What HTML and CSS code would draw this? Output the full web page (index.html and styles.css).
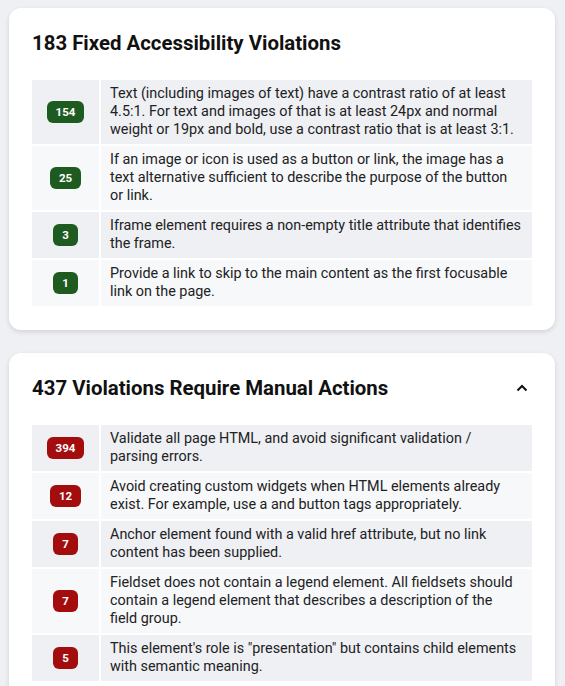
FILE: index.html
```html
<!DOCTYPE html>
<html lang="en">
<head>
    <meta charset="UTF-8">
    <meta name="viewport" content="width=device-width, initial-scale=1.0">
    <title>Accessibility Report</title>
    <link rel="stylesheet" href="styles.css">
</head>
<body>
    <div class="page">
        <section class="card">
            <div class="card-head">
                <h2>183 Fixed Accessibility Violations</h2>
            </div>
            <div class="rules">
                <div class="rule">
                    <div class="count"><span class="badge fixed">154</span></div>
                    <div class="desc">Text (including images of text) have a contrast ratio of at least 4.5:1. For text and images of that is at least 24px and normal weight or 19px and bold, use a contrast ratio that is at least 3:1.</div>
                </div>
                <div class="rule">
                    <div class="count"><span class="badge fixed">25</span></div>
                    <div class="desc">If an image or icon is used as a button or link, the image has a text alternative sufficient to describe the purpose of the button or link.</div>
                </div>
                <div class="rule">
                    <div class="count"><span class="badge fixed">3</span></div>
                    <div class="desc">Iframe element requires a non-empty title attribute that identifies the frame.</div>
                </div>
                <div class="rule">
                    <div class="count"><span class="badge fixed">1</span></div>
                    <div class="desc">Provide a link to skip to the main content as the first focusable link on the page.</div>
                </div>
            </div>
        </section>

        <section class="card">
            <div class="card-head">
                <h2>437 Violations Require Manual Actions</h2>
                <button class="toggle" aria-label="Collapse">
                    <svg width="12" height="8" viewBox="0 0 12 8"><path d="M1.5 6.5 6 2l4.5 4.5" fill="none" stroke="#111" stroke-width="2"/></svg>
                </button>
            </div>
            <div class="rules">
                <div class="rule">
                    <div class="count"><span class="badge manual">394</span></div>
                    <div class="desc">Validate all page HTML, and avoid significant validation / parsing errors.</div>
                </div>
                <div class="rule">
                    <div class="count"><span class="badge manual">12</span></div>
                    <div class="desc">Avoid creating custom widgets when HTML elements already exist. For example, use a and button tags appropriately.</div>
                </div>
                <div class="rule">
                    <div class="count"><span class="badge manual">7</span></div>
                    <div class="desc">Anchor element found with a valid href attribute, but no link content has been supplied.</div>
                </div>
                <div class="rule">
                    <div class="count"><span class="badge manual">7</span></div>
                    <div class="desc">Fieldset does not contain a legend element. All fieldsets should contain a legend element that describes a description of the field group.</div>
                </div>
                <div class="rule">
                    <div class="count"><span class="badge manual">5</span></div>
                    <div class="desc">This element's role is "presentation" but contains child elements with semantic meaning.</div>
                </div>
            </div>
        </section>
    </div>
</body>
</html>
```

FILE: styles.css
```css
body {
    font-family: Roboto, "Liberation Sans", sans-serif;
    margin: 0;
    padding: 0;
    background-color: #eef0f4;
    color: #222;
}
.page {
    display: flex;
    flex-direction: column;
    gap: 23px;
    padding: 8px 10px 0 9px;
}
.card {
    background-color: #fff;
    border-radius: 12px;
    box-shadow: 0 2px 5px rgba(0, 0, 0, 0.12);
    padding: 23px 23px 24px 23px;
}
.card-head {
    display: flex;
    align-items: center;
    justify-content: space-between;
    margin-bottom: 25px;
}
.card-head h2 {
    margin: 0;
    font-size: 20.4px;
    line-height: 24px;
    font-weight: 700;
    color: #111;
}
.toggle {
    border: none;
    background: none;
    padding: 0;
    margin-right: 4px;
    display: flex;
}
.rules {
    display: flex;
    flex-direction: column;
    gap: 2px;
}
.rule {
    display: flex;
    gap: 2px;
}
.count {
    width: 67px;
    flex-shrink: 0;
    display: flex;
    align-items: center;
    justify-content: center;
}
.desc {
    flex: 1;
    padding: 5px 10px 5px 9px;
    font-size: 14.4px;
    line-height: 18px;
}
.rule:nth-child(odd) .count,
.rule:nth-child(odd) .desc {
    background-color: #eef0f4;
}
.rule:nth-child(even) .count,
.rule:nth-child(even) .desc {
    background-color: #f7f8fa;
}
.badge {
    display: inline-block;
    min-width: 7px;
    height: 22px;
    line-height: 22px;
    padding: 0 9px;
    border-radius: 6px;
    color: #fff;
    font-size: 11.5px;
    font-weight: 700;
    text-align: center;
}
.badge.fixed {
    background-color: #1e5b20;
}
.badge.manual {
    background-color: #a30d0d;
}
```
